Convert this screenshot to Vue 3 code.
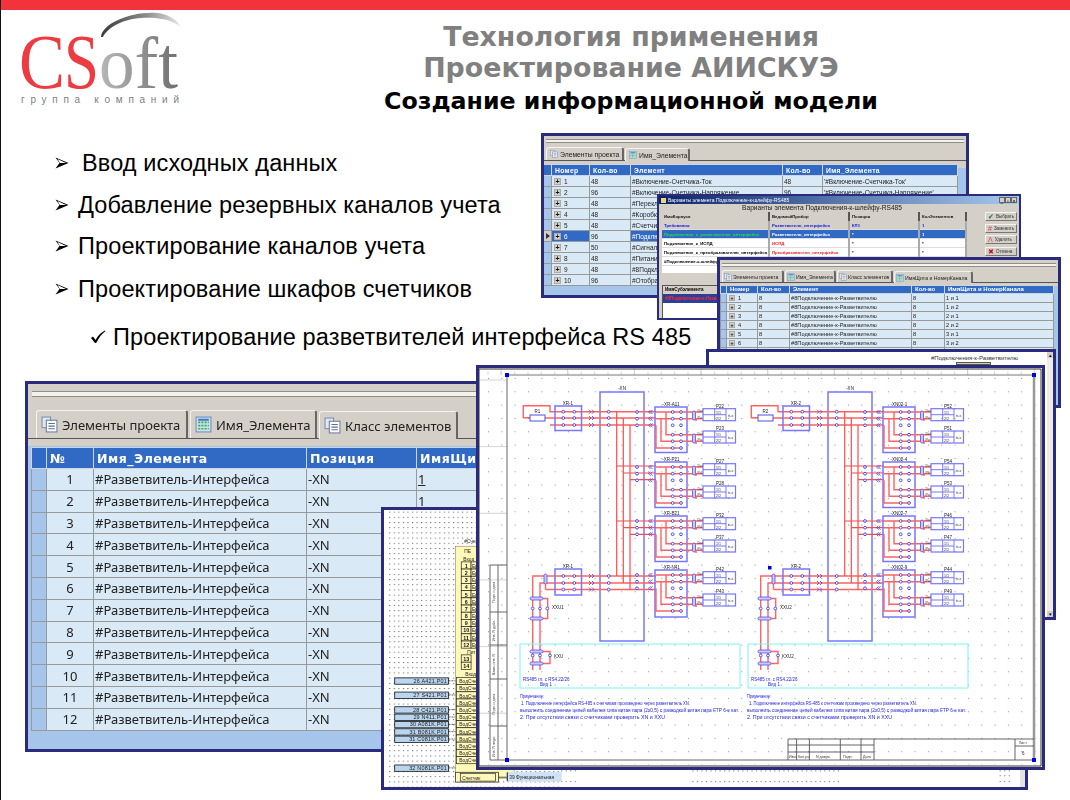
<template>
  <div class="slide">
    <div class="redbar"></div>

    <header class="head">
      <svg class="logo" viewBox="0 0 190 105" width="190" height="105">
        <defs>
          <linearGradient id="swoosh" x1="0" x2="1" y1="0" y2="0">
            <stop offset="0" stop-color="#3a3a3a" />
            <stop offset="0.55" stop-color="#8a8a8a" />
            <stop offset="1" stop-color="#e8e8e8" />
          </linearGradient>
          <linearGradient id="oft" x1="0" x2="1" y1="0" y2="0">
            <stop offset="0" stop-color="#b8b8b8" />
            <stop offset="1" stop-color="#6f6f6f" />
          </linearGradient>
        </defs>
        <path class="swoosh" d="M100 27 C101 13 132 1 156 3 C167 4 175 9 180 17 C170 9 155 7 140 8 C122 9 106 18 102 27 Z" />
        <text class="logo-c" x="18" y="78" textLength="46" lengthAdjust="spacingAndGlyphs">C</text>
        <text class="logo-s" x="63" y="78" textLength="35" lengthAdjust="spacingAndGlyphs">S</text>
        <text class="logo-oft" x="98" y="78" textLength="79" lengthAdjust="spacingAndGlyphs">oft</text>
        <text class="logo-sub" x="20" y="93" textLength="158">группа компаний</text>
      </svg>
      <div class="titles">
        <h1>Технология применения</h1>
        <h1>Проектирование АИИСКУЭ</h1>
        <h2>Создание информационной модели</h2>
      </div>
    </header>

    <ul class="points">
      <li v-for="p in points" :key="p.text" :class="p.cls">
        <svg v-if="!p.check" class="arrow" viewBox="0 0 14 12" width="14" height="12">
          <path d="M0.5 0.5 L13.5 6 L0.5 11.5 L4.5 6 Z" fill="#000" />
          <path d="M2.5 2 L11 6 L4.8 6 Z" fill="#fff" />
        </svg>
        <svg v-else class="tick" viewBox="0 0 16 14" width="16" height="14">
          <path d="M1 8 L3 6.6 L5.6 10 C8 5.6 11 2.6 15 0.6 L15.4 1.2 C11.6 4 9 7.4 6.2 13 L5 13 Z" fill="#000" />
        </svg>
        <span>{{ p.text }}</span>
      </li>
    </ul>

    <!-- окна таблиц -->
    <section v-for="w in panes" :key="w.cls" class="win" :class="w.cls">
      <div class="rules"></div>
      <div class="tabs">
        <div v-for="t in w.tabs" :key="t.name" class="tab" :class="{ on: t.on }">
          <svg v-if="t.grid" class="tabicon" viewBox="0 0 16 16">
            <rect x="1" y="1" width="14" height="14" fill="#cfe0f4" stroke="#6f8fb5" />
            <path d="M3 6h10M3 9h10M3 12h10" stroke="#35b04a" stroke-width="1.6" stroke-dasharray="2 1" />
            <path d="M3 3.5h10" stroke="#3a78c8" stroke-width="2" />
          </svg>
          <svg v-else class="tabicon" viewBox="0 0 16 16">
            <rect x="1" y="1" width="8" height="10" fill="#dfe8f4" stroke="#7c8fb0" />
            <rect x="5" y="4" width="10" height="11" fill="#fff" stroke="#6a7ea3" />
            <path d="M7 7h6M7 9.500h6M7 12h6" stroke="#5a6f96" />
          </svg>
          <span>{{ t.name }}</span>
        </div>
      </div>
      <table class="grid">
        <colgroup>
          <col v-for="(c, i) in w.cols" :key="i" :style="{ width: c + 'px' }" />
        </colgroup>
        <thead>
          <tr>
            <th class="gut"></th>
            <th v-for="h in w.head" :key="h">{{ h }}</th>
          </tr>
        </thead>
        <tbody>
          <tr v-for="(r, i) in w.rows" :key="i" :class="{ sel: w.sel === i }">
            <td class="gut"><i v-if="w.sel === i" class="mark"></i></td>
            <td v-for="(v, j) in r" :key="j" :class="{ num: w.centerFirst && j === 0 }">
              <b v-if="w.plus && j === 0" class="plus">+</b>
              <u v-if="w.under && j === 3 && i === 0">{{ v }}</u>
              <template v-else>{{ v }}</template>
            </td>
          </tr>
        </tbody>
      </table>
    </section>

    <!-- диалог вариантов -->
    <section class="dialog">
      <div class="caption">
        <span class="capicon"></span>
        <span class="captext">Варианты элемента Подключение-к-шлейфу-RS485</span>
        <span class="capbtns"><i>_</i><i>▫</i><i>×</i></span>
      </div>
      <div class="dlgtitle">Варианты элемента Подключения-к-шлейфу-RS485</div>
      <div class="dlgbody">
        <div class="dlgleft">
          <div class="varbox">
            <table class="vars">
              <thead>
                <tr><th>ИмяКорпуса</th><th>ВедомыйПрибор</th><th>Позиция</th><th>КолЭлементов</th></tr>
              </thead>
              <tbody>
                <tr v-for="r in variants" :key="r.name" :class="r.cls">
                  <td class="c1">{{ r.name }}</td>
                  <td class="c2">{{ r.device }}</td>
                  <td>{{ r.pos }}</td>
                  <td>{{ r.qty }}</td>
                </tr>
              </tbody>
            </table>
          </div>
          <div class="subtable">
            <div class="subhead">ИмяСубэлемента</div>
            <div class="subrow">#8Подключение-к-Разветвителю</div>
          </div>
        </div>
        <div class="dlgbtns">
          <button v-for="b in dlgButtons" :key="b.text" type="button">
            <span :class="b.cls">{{ b.icon }}</span>{{ b.text }}
          </button>
        </div>
      </div>
    </section>

    <!-- лист за схемой -->
    <section class="sheet-e">
      <div class="e-top">
        <span class="e-label">#Подключения-к-Разветвителю</span>
        <span class="e-tab"></span>
      </div>
      <div class="scroll"><i>▴</i><em></em><i>▾</i></div>
    </section>

    <!-- лист с таблицей клемм -->
    <section class="sheet-g">
      <svg viewBox="380 507 647 283" width="641" height="277" class="soft">
        <defs>
          <pattern id="fine" x="386" y="514" width="4.65" height="5.3" patternUnits="userSpaceOnUse">
            <rect width="1.2" height="1" fill="#666" />
          </pattern>
        </defs>
        <rect x="380" y="507" width="647" height="283" fill="url(#fine)" />
        <rect x="557" y="768" width="470" height="22" fill="#fff" />
        <path class="dots" d="M691 773.500 H843 M691 784.500 H843 M1005 773.500 H1018 M1005 778.500 H1018 M1005 784.500 H1018 M557 773.500 H575 M557 784.500 H575" />
        <text class="g-t" x="458" y="541">#Счетчик</text>
        <rect x="449" y="544" width="60" height="237" fill="#fff8b8" stroke="#8a8456" stroke-width=".6" />
        <rect x="449" y="775" width="44" height="10" fill="#fff8b8" stroke="#333" stroke-width=".8" />
        <text class="g-t" x="458" y="551">ПЕ</text>
        <text class="g-t" x="457" y="559">Вход</text>
        <g v-for="n in 12" :key="n">
          <rect x="455" :y="560 + (n - 1) * 7.350" width="10" height="7.300" fill="#fff8b8" stroke="#222" stroke-width=".7" />
          <text class="g-n" x="460" :y="566 + (n - 1) * 7.350">{{ n }}</text>
          <rect x="465" :y="560 + (n - 1) * 7.350" width="12" height="7.300" fill="#fff8b8" stroke="#222" stroke-width=".7" />
          <text class="g-t" x="466" :y="566 + (n - 1) * 7.350">Ер</text>
        </g>
        <text class="g-t" x="461" y="654">Пит</text>
        <g v-for="n in 2" :key="'p' + n">
          <rect x="455" :y="655 + (n - 1) * 7.500" width="10" height="7.500" fill="#fff8b8" stroke="#222" stroke-width=".7" />
          <text class="g-n" x="460" :y="661 + (n - 1) * 7.500">{{ 12 + n }}</text>
        </g>
        <text class="g-t" x="459" y="677">Входы</text>
        <g v-for="n in 12" :key="'v' + n">
          <rect x="450" :y="678 + (n - 1) * 7.350" width="40" height="7.350" fill="#fff8b8" stroke="#222" stroke-width=".7" />
          <text class="g-t" x="453" :y="684 + (n - 1) * 7.350">ВодСчет</text>
        </g>
        <g v-for="b in pins" :key="b.text">
          <rect x="387" :y="b.y" width="55" height="6.500" fill="#b9d5ef" stroke="#111" stroke-width=".8" />
          <text class="g-p" x="440.500" :y="b.y + 5.200">{{ b.text }}</text>
          <path :d="`M442 ${b.y + 3} H449`" stroke="#111" stroke-width=".7" stroke-dasharray="2 1" />
        </g>
        <rect x="454" y="776" width="36" height="8" fill="#fff8b8" stroke="#222" stroke-width=".7" />
        <text class="g-t" x="456" y="782.500">Счетчик</text>
        <path d="M493 780 H502" stroke="#111" stroke-width=".7" />
        <rect x="502" y="775" width="55" height="9" fill="#cfe2f5" stroke="#cfe2f5" />
        <path d="M502 775 V784" stroke="#111" />
        <text class="g-t" x="504" y="782">39  Функциональная</text>
      </svg>
      <div class="scroll slim"></div>
    </section>

    <!-- схема подключения -->
    <section class="sheet-f">
      <svg viewBox="475 365 569 405" width="569" height="405" class="soft">
        <defs>
          <pattern id="pts" x="487" y="378" width="13.330" height="13.330" patternUnits="userSpaceOnUse">
            <rect width="1" height="1" fill="#8d8d8d" />
          </pattern>
        </defs>
        <rect x="478" y="368" width="563" height="399" fill="#fff" />
        <rect x="478" y="370" width="563" height="395" fill="url(#pts)" />
        <path class="ruler" :d="rulerPath" />
        <path d="M478 369 H1040 V766 H478 Z" fill="none" stroke="#333" stroke-width="1" />

        <g v-for="(half, hi) in halves" :key="hi" :transform="`translate(${half.dx} 0)`">
          <rect class="blk" x="599" y="392" width="44" height="249" />
          <text class="s-t" x="621" y="389.500" text-anchor="middle">-XN</text>
          <path class="red" :d="wirePath" />
          <path class="pink" :d="busPath" />
          <g v-for="(r, ri) in relays" :key="r">
            <rect class="blk" x="654" :y="r" width="32" :height="ri === 3 ? 47 : 45.500" />
            <text class="s-t" x="670" :y="r - 1.500" text-anchor="middle">{{ half.relay[ri] }}</text>
            <path class="red" :d="relayPath(r)" />
            <rect class="cap" x="691.500" :y="r + 4" width="3" height="9" rx="1.500" />
            <rect class="cap" x="691.500" :y="r + 27" width="3" height="9" rx="1.500" />
            <g v-for="(m, mi) in [1.700, 24]" :key="m">
              <text class="s-t" x="719" :y="r + m - 1" text-anchor="middle">{{ half.meters[ri][mi] }}</text>
              <rect class="blk thin" x="702" :y="r + m" width="32.500" height="12" />
              <path class="thinline" :d="`M702 ${r + m + 6} H725 M713.700 ${r + m} V${r + m + 12} M725 ${r + m} V${r + m + 12}`" />
              <text class="s-k" x="696.500" :y="r + m + 3.500">Dы</text>
              <text class="s-k" x="696.500" :y="r + m + 10">Рн</text>
              <text class="s-k" x="715" :y="r + m + 5">1/1</text>
              <text class="s-k" x="715" :y="r + m + 11">2/2</text>
              <text class="s-k" x="727" :y="r + m + 8">tr-s</text>
            </g>
            <circle v-for="(c, ci) in relayDots" :key="ci" class="dot" :cx="c[0]" :cy="r + c[1]" r="1.400" />
            <circle v-for="(y, yi) in [5, 11.700, 18.300]" :key="'l' + yi" class="dot" cx="636" :cy="r + y" r="1.400" />
            <path v-for="(y, yi) in [5, 11.700, 18.300]" :key="'v' + yi" class="chev" :d="`M651.500 ${r + y - 2} l-2 2 l2 2 M649.500 ${r + y - 2} l-2 2 l2 2`" />
          </g>

          <!-- верхний и нижний ввод -->
          <rect class="blk" x="554" y="406" width="26.500" height="24.500" />
          <rect class="blk" x="554" y="569" width="26.500" height="26" />
          <text class="s-t" x="567" y="404.500" text-anchor="middle">{{ half.xs[0] }}</text>
          <text class="s-t" x="567" y="567.500" text-anchor="middle">{{ half.xs[1] }}</text>
          <text class="s-t" x="536.500" y="413" text-anchor="middle">{{ half.res }}</text>
          <rect class="res" x="529" y="415" width="15" height="6" />
          <g v-for="y in [411.700, 418, 425, 576, 583, 589.500]" :key="y">
            <circle class="dot" cx="562.300" :cy="y" r="1.400" />
            <circle class="dot" cx="573.300" :cy="y" r="1.400" />
            <circle class="dot" cx="607.700" :cy="y" r="1.400" />
            <path class="chev" :d="`M588 ${y - 2} l2 2 l-2 2 M591 ${y - 2} l2 2 l-2 2`" />
          </g>
          <rect class="cap" x="543" y="574" width="3" height="10" rx="1.500" />
          <rect class="cap" x="529" y="597" width="13" height="3" rx="1.500" />
          <rect class="cap" x="529" y="617" width="13" height="3" rx="1.500" />
          <circle v-for="x in [531.700, 539, 546.300]" :key="x" class="dot" :cx="x" cy="608.500" r="1.400" />
          <text class="s-t" x="551" y="609">{{ half.xt[0] }}</text>
          <rect class="cap" x="529" y="650" width="13" height="3" rx="1.500" />
          <rect class="cap" x="529" y="662" width="13" height="3" rx="1.500" />
          <circle v-for="x in [531.700, 539, 549]" :key="'b' + x" class="dot" :cx="x" cy="655.500" r="1.400" />
          <text class="s-t" x="553" y="658">{{ half.xt[1] }}</text>

          <rect class="cy" x="519" y="644" width="220" height="44" />
          <text class="s-b" x="522" y="681">RS485 гл. с RS4.22/26</text>
          <text class="s-b" x="539" y="686">Вид 1</text>
        </g>

        <g v-for="n in notes" :key="n.x + n.y">
          <text class="s-b" :x="n.x" :y="n.y" :textLength="n.w" lengthAdjust="spacingAndGlyphs">{{ n.text }}</text>
        </g>

        <!-- рамка и штамп -->
        <path d="M506 375 V760 H1033" fill="none" stroke="#666" stroke-width="1" />
        <path d="M506 375 H1033" fill="none" stroke="#777" stroke-width="1" />
        <path d="M1033 375 V760" fill="none" stroke="#999" stroke-width="2.500" />
        <path class="stamp" d="M489 565 H506 M489 612 H506 M489 645 H506 M489 679 H506 M489 726 H506 M489 565 V760 H506 M497 565 V760" />
        <text v-for="s in sideLabels" :key="s.y" class="s-k" :transform="`translate(494 ${s.y}) rotate(-90)`">{{ s.t }}</text>
        <path class="stamp" d="M787 760 V739 H1033 M787 745 H873 M787 752 H873 M795.600 739 V760 M808.400 739 V760 M839.300 739 V760 M860 739 V760 M873 739 V760 M1014 739 V760 M1014 746 H1033" />
        <text class="s-k" x="788" y="758">Изм.</text>
        <text class="s-k" x="797" y="758">Кол.уч</text>
        <text class="s-k" x="815" y="758">N докум.</text>
        <text class="s-k" x="842" y="758">Подп.</text>
        <text class="s-k" x="862" y="758">Дата</text>
        <text class="s-k" x="1018" y="744">Лист</text>
        <text class="s-t" x="1021" y="755">6</text>

        <rect class="handle" x="504" y="373" width="4" height="4" />
        <rect class="handle" x="1031" y="373" width="4" height="4" />
        <rect class="handle" x="1031" y="758" width="4" height="4" />
        <rect class="handle" x="504" y="758" width="4" height="4" />
        <rect class="handle" x="767" y="566" width="3.500" height="3.500" />
      </svg>
    </section>
  </div>
</template>

<script setup>
const points = [
  { text: 'Ввод исходных данных', cls: 'p1' },
  { text: 'Добавление резервных каналов учета', cls: 'p2' },
  { text: 'Проектирование каналов учета', cls: 'p3' },
  { text: 'Проектирование шкафов счетчиков', cls: 'p4' },
  { text: 'Проектирование разветвителей интерфейса RS 485', cls: 'p5', check: true },
];

const makeRows = (n, fn) => Array.from({ length: n }, (_, i) => fn(i));

const paneA = {
  cls: 'pane-a',
  tabs: [
    { name: 'Элементы проекта' },
    { name: 'Имя_Элемента', grid: true },
    { name: 'Класс элементов', on: true },
  ],
  cols: [15, 47, 213, 110, 110],
  head: ['№', 'Имя_Элемента', 'Позиция', 'ИмяЩита'],
  rows: makeRows(12, (i) => [String(i + 1), '#Разветвитель-Интерфейса', '-XN', '1']),
  centerFirst: true,
  under: true,
};

const namesB = [
  ['48', '#Включение-Счетчика-Ток', '48', "'#Включение-Счетчика-Ток'"],
  ['96', '#Включение-Счетчика-Напряжение', '96', "'#Включение-Счетчика-Напряжение'"],
  ['48', '#Переключатель-Испытательный', '48', "'#Переключатель'"],
  ['48', '#Коробка-Испытательная', '48', "'#Коробка'"],
  ['48', '#Счетчик', '48', "'#Счетчик'"],
  ['96', '#Подключение-к-шлейфу-RS485', '96', "'#Подключение'"],
  ['50', '#Сигнал', '50', "'#Сигнал'"],
  ['48', '#Питание', '48', "'#Питание'"],
  ['48', '#8Подключение', '48', "'#8Подключение'"],
  ['96', '#Отображение', '96', "'#Отображение'"],
];

const paneB = {
  cls: 'pane-b',
  tabs: [{ name: 'Элементы проекта' }, { name: 'Имя_Элемента', grid: true, on: true }],
  cols: [8, 38, 41, 152, 40, 135],
  head: ['Номер', 'Кол-во', 'Элемент', 'Кол-во', 'Имя_Элемента'],
  rows: namesB.map((r, i) => [String(i + 1), ...r]),
  plus: true,
  sel: 5,
};

const pairsD = ['1 и 1', '1 и 2', '2 и 1', '2 и 2', '3 и 1', '3 и 2', '4 и 1', '4 и 2'];

const paneD = {
  cls: 'pane-d',
  tabs: [
    { name: 'Элементы проекта' },
    { name: 'Имя_Элемента', grid: true },
    { name: 'Класс элементов' },
    { name: 'ИмяЩита и НомерКанала', grid: true, on: true },
  ],
  cols: [6, 31, 32, 122, 33, 109],
  head: ['Номер', 'Кол-во', 'Элемент', 'Кол-во', 'ИмяЩита и НомерКанала'],
  rows: pairsD.map((p, i) => [String(i + 1), '8', '#8Подключение-к-Разветвителю', '8', p]),
  plus: true,
};

const panes = [paneA, paneB, paneD];

const variants = [
  { name: 'Требования', device: 'Разветвитель_интерфейса', pos: 'КЛ1', qty: '1', cls: 'req' },
  { name: 'Подключение_к_разветвителю_интерфейса', device: 'Разветвитель_интерфейса', pos: '*', qty: '1', cls: 'cur' },
  { name: 'Подключение_к_ИСПД', device: 'ИСПД', pos: '*', qty: '*', cls: 'alt' },
  { name: 'Подключение_к_преобразователю_интерфейса', device: 'Преобразователь_интерфейса', pos: '*', qty: '*', cls: 'alt' },
  { name: '#Подключение-к-шлейфу', device: '', pos: '', qty: '', cls: 'plain' },
];

const dlgButtons = [
  { text: 'Выбрать', icon: '✔', cls: 'ok' },
  { text: 'Заменить', icon: '#', cls: 'rep' },
  { text: 'Удалить', icon: 'Λ', cls: 'rep' },
  { text: 'Отмена', icon: '✖', cls: 'del' },
];

const pins = [
  { y: 678.500, text: '26  A421.P01' },
  { y: 693, text: '27  S421.P01' },
  { y: 708, text: '28  C421.P01' },
  { y: 715.500, text: '29  N411.P01' },
  { y: 723, text: '30  A081K.P01' },
  { y: 730.500, text: '31  B081K.P01' },
  { y: 738, text: '31  C081K.P01' },
  { y: 767.500, text: '32  N081K.P01' },
];

// геометрия схемы задана в координатах слайда
const relays = [407, 462, 516, 570];
const busX = [615.7, 622.3, 629];
const topY = [411.7, 418, 425];
const lowY = [576, 583, 589.5];
const branches = [
  [466, 473, 479.7],
  [521, 527.7, 534.3],
];

const halves = [
  {
    dx: 0,
    res: 'R1',
    xs: ['XR-1', 'XR-1'],
    xt: ['XXU1', 'KXU'],
    relay: ['-XR-A11', '-XR-P21', '-XR-B21', '-XR-N41'],
    meters: [
      ['P22', 'P23'],
      ['P27', 'P28'],
      ['P32', 'P37'],
      ['P42', 'P43'],
    ],
  },
  {
    dx: 228,
    res: 'R2',
    xs: ['XR-2', 'XR-2'],
    xt: ['XXU2', 'KXU2'],
    relay: ['-XN02-1', '-XN02-4', '-XN02-7', '-XN02-9'],
    meters: [
      ['P52', 'P51'],
      ['P54', 'P53'],
      ['P46', 'P47'],
      ['P44', 'P49'],
    ],
  },
];

const wirePath = [
  'M529 417.7 H522.3 V405.7 H549 V411.7 H655',
  'M544 418 H655',
  'M549 425 H655',
  'M531.7 670 V576 H655',
  'M539 670 V583 H655',
  'M544.5 589.500 H655',
  'M544.5 584 V589.5',
  'M542 598.5 H546.7 V618.5 H542',
  'M542 651.5 H549 V663.5 H542',
].join(' ');

const busPath = busX
  .map((x, i) => {
    const stubs = branches.map((b) => `M${x} ${b[i]} H655`).join(' ');
    return `M${x} ${topY[i]} V${lowY[i]} ${stubs}`;
  })
  .join(' ');

const relayPath = (r) =>
  [
    `M655 ${r + 5} H702`,
    `M655 ${r + 11.7} H702`,
    `M665 ${r + 5} V${r + 27.7} H702`,
    `M660 ${r + 11.7} V${r + 34.3} H702`,
    `M655 ${r + 18.3} V${r + 41} H680`,
    `M694 ${r + 13} H696 M694 ${r + 36} H696`,
  ].join(' ');

const relayDots = [5, 11.7, 18.3, 27.7, 34.3, 41].flatMap((y) => [
  [671.7, y],
  [680, y],
]);

const notes = [
  { x: 519, y: 698, w: 24, text: 'Примечание:' },
  { x: 520, y: 705, w: 169, text: '1. Подключение интерфейса RS-485 к счетчикам произведено через разветвитель XN.' },
  { x: 519, y: 712, w: 219, text: 'выполнить соединение цепей кабелем типа витая пара (2х0,5) с разводкой витая пара FTP 6-е кат.' },
  { x: 519, y: 719, w: 145, text: '2. При отсутствии связи с счетчиками проверить XN и XXU' },
  { x: 746, y: 698, w: 24, text: 'Примечание:' },
  { x: 748, y: 705, w: 168, text: '1. Подключение интерфейса RS-485 к счетчикам произведено через разветвитель XN.' },
  { x: 746, y: 712, w: 219, text: 'выполнить соединение цепей кабелем типа витая пара (2х0,5) с разводкой витая пара FTP 6-е кат.' },
  { x: 746, y: 719, w: 145, text: '2. При отсутствии связи с счетчиками проверить XN и XXU' },
];

const sideLabels = [
  { t: 'Подп. и дата', y: 603 },
  { t: 'Инв. N дубл.', y: 641 },
  { t: 'Взам. инв. N', y: 675 },
  { t: 'Подп. и дата', y: 715 },
  { t: 'Инв. N подл.', y: 757 },
];

// засечки линейки и светлая сетка вокруг листа
let ruler = '';
for (let x = 487; x < 1040; x += 13.33) ruler += `M${x.toFixed(1)} 371.5 V375 `;
for (let x = 500; x < 1040; x += 66.65) ruler += `M${x.toFixed(1)} 369 V375 `;
for (let y = 380; y < 770; y += 66.65) ruler += `M478 ${y.toFixed(1)} H506 `;
const rulerPath = ruler;
</script>

<style scoped>
.slide {
  position: relative;
  width: 1069px;
  height: 800px;
  overflow: hidden;
  background: #fff;
  border-left: 1px solid #111;
  font-family: "Liberation Sans", Arial, sans-serif;
  color: #000;
}

.redbar {
  position: absolute;
  left: -1px;
  right: 0;
  top: 0;
  height: 10px;
  background: #f3333b;
}

.head {
  display: flex;
  padding-top: 10px;
  height: 105px;
}

.logo {
  flex: none;
  margin-right: 1px;
}

.swoosh {
  fill: url(#swoosh);
}

.logo-c,
.logo-s {
  font-family: "Liberation Serif", serif;
  font-size: 78px;
  fill: #ee3a41;
}

.logo-oft {
  font-family: "Liberation Serif", serif;
  font-size: 74px;
  fill: url(#oft);
}

.logo-sub {
  font-family: "Liberation Sans", sans-serif;
  font-size: 10px;
  fill: #7f7f7f;
}

.titles {
  flex: 1;
  text-align: center;
  font-family: "DejaVu Sans", Verdana, sans-serif;
  padding-top: 11px;
}

.titles h1 {
  margin: 0;
  font-size: 26.800px;
  line-height: 31px;
  font-weight: 700;
  color: #808080;
}

.titles h2 {
  margin: 3px 0 0;
  font-size: 23.700px;
  line-height: 31px;
  font-weight: 700;
  color: #000;
}

.points {
  list-style: none;
  margin: 0;
  padding: 35px 0 0 54px;
  font-size: 23.500px;
  line-height: 26px;
  letter-spacing: 0.13px;
}

.points li {
  display: flex;
  align-items: center;
  white-space: nowrap;
}

.p1 {
  gap: 13px;
}

.p2,
.p3,
.p4 {
  gap: 9px;
}

.p2 {
  margin-top: 16px;
}

.p3 {
  margin-top: 15px;
}

.p4 {
  margin-top: 17px;
}

.p5 {
  margin: 22px 0 0 35px;
  gap: 7px;
}

.arrow,
.tick {
  flex: none;
}

/* окна */
.win {
  position: absolute;
  box-sizing: border-box;
  background: #d4d0c8;
  border: 3px solid #2b2b7d;
  overflow: hidden;
  filter: blur(0.25px);
}

.rules {
  border-top: 1px solid #8f8f8a;
  border-bottom: 1px solid #8f8f8a;
  background: #f4f2ee;
  height: 4px;
}

.tabs {
  display: flex;
  align-items: flex-end;
  border-bottom: 1px solid #555;
}

.tab {
  display: flex;
  align-items: center;
  box-sizing: border-box;
  background: #d4d0c8;
  border: 1px solid #f4f2ee;
  border-right: 2px solid #666;
  border-bottom: 0;
  border-radius: 3px 3px 0 0;
  white-space: nowrap;
  overflow: hidden;
  color: #222;
}

.tab.on {
  position: relative;
  top: 1px;
}

.tabicon {
  flex: none;
}

.grid {
  table-layout: fixed;
  border-collapse: collapse;
  background: #d9e9f6;
}

.grid th {
  background: #316ac5;
  color: #fff;
  text-align: left;
  font-weight: 700;
  border: 1px solid #cfd5e0;
  padding: 0 3px;
  overflow: hidden;
  white-space: nowrap;
}

.grid td {
  border: 1px solid #999;
  padding: 0 1px;
  white-space: nowrap;
  overflow: hidden;
  color: #222;
}

.grid .gut {
  background: #a6c5ea;
  padding: 0;
}

.grid th.gut {
  background: #316ac5;
}

.grid td.num {
  text-align: center;
}

.grid tr.sel td {
  background: #316ac5;
  color: #fff;
}

.grid tr.sel td.gut {
  background: #d4d0c8;
}

.grid tr.sel td:nth-child(3) {
  background: #d9e9f6;
  color: #222;
  border-style: dashed;
}

.mark {
  display: block;
  width: 0;
  height: 0;
  border-left: 4px solid #333;
  border-top: 3px solid transparent;
  border-bottom: 3px solid transparent;
  margin-left: 2px;
}

.plus {
  display: inline-block;
  box-sizing: border-box;
  width: 7px;
  height: 7px;
  line-height: 5px;
  margin: 0 3px 0 1px;
  text-align: center;
  font-size: 7px;
  font-weight: 700;
  background: #d4d0c8;
  border: 1px solid #aaa;
  color: #111;
  vertical-align: 0;
}

/* большая таблица */
.pane-a {
  left: 24px;
  top: 381px;
  width: 510px;
  height: 371px;
  background: linear-gradient(#d4d0c8 0 62px, #a6c5ea 62px);
  z-index: 1;
}

.pane-a .rules {
  margin: 7px 4px 0 4px;
}

.pane-a .tabs {
  margin-top: 12px;
  height: 29px;
  padding-left: 8px;
  gap: 2px;
  font-family: "Noto Sans", "Open Sans", sans-serif;
  font-size: 13px;
}

.pane-a .tab {
  height: 28px;
  padding: 0 6px 0 4px;
  gap: 4px;
}

.pane-a .tab:nth-child(1) {
  width: 152px;
}

.pane-a .tab:nth-child(2) {
  width: 127px;
}

.pane-a .tab:nth-child(3) {
  width: 139px;
}

.pane-a .tabicon {
  width: 17px;
  height: 17px;
}

.pane-a .grid {
  margin: 8px 0 0 3px;
  width: 495px;
  font-family: "Noto Sans", "Open Sans", sans-serif;
  font-size: 13px;
}

.pane-a .grid th {
  height: 20px;
  font-family: "DejaVu Sans", sans-serif;
  font-size: 12.500px;
  letter-spacing: 0.5px;
}

.pane-a .grid td {
  height: 20.800px;
}

/* верхнее окно */
.pane-b {
  left: 540px;
  top: 133px;
  width: 428px;
  height: 165px;
  background: linear-gradient(#d4d0c8 0 32px, #a6c5ea 32px);
  z-index: 2;
}

.pane-d {
  left: 716px;
  top: 257px;
  width: 344px;
  height: 151px;
  background: linear-gradient(#d4d0c8 0 26px, #a6c5ea 26px);
  z-index: 4;
}

.pane-b .rules,
.pane-d .rules {
  margin: 3px 2px 0;
  height: 2px;
}

.pane-b .tabs,
.pane-d .tabs {
  font-family: "Liberation Sans", sans-serif;
  padding-left: 2px;
  gap: 1px;
}

.pane-b .tabs {
  margin-top: 3px;
  height: 14px;
  font-size: 6.800px;
}

.pane-d .tabs {
  margin-top: 1px;
  height: 14px;
  font-size: 5.200px;
}

.pane-b .tab {
  height: 13px;
  padding: 0 3px;
  gap: 2px;
}

.pane-b .tab:nth-child(1) {
  width: 78px;
}

.pane-b .tab:nth-child(2) {
  width: 65px;
}

.pane-d .tab {
  height: 12px;
  padding: 0 1px;
  gap: 1px;
}

.pane-d .tab:nth-child(1) {
  width: 62px;
}

.pane-d .tab:nth-child(2) {
  width: 51px;
}

.pane-d .tab:nth-child(3) {
  width: 56px;
}

.pane-d .tab:nth-child(4) {
  width: 79px;
}

.pane-b .tabicon,
.pane-d .tabicon {
  width: 8px;
  height: 8px;
}

.pane-b .grid {
  margin: 3px 0 0 -1px;
  width: 414px;
  font-family: "Liberation Sans", sans-serif;
  font-size: 6.500px;
}

.pane-b .grid th {
  height: 10px;
  font-size: 6.800px;
  letter-spacing: 0.3px;
}

.pane-b .grid td {
  height: 10px;
  line-height: 9px;
}

.pane-d .grid {
  margin: 2px 0 0 0;
  width: 333px;
  font-family: "Liberation Sans", sans-serif;
  font-size: 5.700px;
}

.pane-d .grid th {
  height: 7px;
  line-height: 7px;
  font-size: 6px;
}

.pane-d .grid td {
  height: 8px;
  line-height: 8px;
}

.pane-d .plus {
  width: 6px;
  height: 6px;
  line-height: 4px;
  font-size: 6px;
}

/* диалог */
.dialog {
  position: absolute;
  left: 656px;
  top: 194px;
  width: 364px;
  height: 126px;
  box-sizing: border-box;
  background: #d4d0c8;
  border: 2px solid #2b2b7d;
  z-index: 3;
  font-family: "Liberation Sans", sans-serif;
  overflow: hidden;
  filter: blur(0.25px);
}

.caption {
  display: flex;
  align-items: center;
  height: 8px;
  background: linear-gradient(90deg, #0a246a, #a6caf0);
  color: #fff;
  font-size: 5px;
  padding: 0 2px;
  gap: 2px;
}

.capicon {
  width: 5px;
  height: 5px;
  background: #e8d878;
}

.captext {
  flex: 1;
  white-space: nowrap;
}

.capbtns {
  display: flex;
}

.capbtns i {
  display: block;
  width: 6px;
  height: 6px;
  line-height: 6px;
  font-size: 5px;
  font-style: normal;
  text-align: center;
  background: #d4d0c8;
  border: 1px solid #666;
  box-sizing: border-box;
  color: #000;
}

.dlgtitle {
  text-align: center;
  font-size: 6.600px;
  line-height: 8px;
  height: 8px;
  padding-right: 34px;
  color: #222;
}

.dlgbody {
  display: flex;
  padding-left: 3px;
  gap: 18px;
}

.dlgleft {
  width: 305px;
  flex: none;
}

.varbox {
  height: 61px;
  background: #fff;
}

.vars {
  width: 305px;
  table-layout: fixed;
  border-collapse: collapse;
  background: #fff;
  font-size: 4.300px;
  font-weight: 700;
}

.vars th {
  height: 9px;
  background: #d4d0c8;
  color: #111;
  text-align: left;
  border-right: 2px solid #555;
  padding: 0 2px;
  white-space: nowrap;
  overflow: hidden;
}

.vars td {
  height: 8px;
  padding: 0 2px;
  border-right: 2px solid #aaa;
  border-bottom: 1px solid #ddd;
  white-space: nowrap;
  overflow: hidden;
}

.vars th:nth-child(1) {
  width: 102px;
}

.vars th:nth-child(2) {
  width: 74px;
}

.vars th:nth-child(3) {
  width: 64px;
}

.vars .req td {
  background: #d4d0c8;
  color: #1616e0;
}

.vars .cur td {
  background: #316ac5;
  color: #fff;
}

.vars .cur .c1 {
  color: #22e040;
}

.vars .alt .c2 {
  color: #ee2222;
}

.subtable {
  margin-top: 12px;
  width: 305px;
  border: 1px solid #555;
  font-size: 4.500px;
  font-weight: 700;
  background: #fff;
  height: 32px;
}

.subhead {
  height: 8px;
  line-height: 8px;
  padding-left: 2px;
  background: #d4d0c8;
}

.subrow {
  height: 9px;
  line-height: 9px;
  padding-left: 2px;
  background: #2a3f9a;
  color: #ff2a2a;
}

.dlgbtns {
  display: flex;
  flex-direction: column;
  gap: 2.500px;
  width: 32px;
}

.dlgbtns button {
  height: 9px;
  padding: 0 0 0 2px;
  display: flex;
  align-items: center;
  gap: 2px;
  border: 1px solid #f4f2ee;
  border-right-color: #777;
  border-bottom-color: #777;
  background: #d4d0c8;
  font-family: inherit;
  font-size: 4.500px;
  color: #333;
}

.dlgbtns span {
  font-size: 7px;
  line-height: 7px;
}

.ok {
  color: #17801f;
}

.rep {
  color: #d04a3a;
}

.del {
  color: #c01818;
}

/* листы */
.sheet-e {
  position: absolute;
  left: 705px;
  top: 349px;
  width: 350px;
  height: 271px;
  box-sizing: border-box;
  background: #fff;
  border: 3px solid #2b2b7d;
  z-index: 5;
}

.e-top {
  position: relative;
  height: 13px;
  background-image: radial-gradient(#777 0.5px, transparent 0.6px);
  background-size: 4px 4px;
  background-position: 0 1px;
  font-family: "Liberation Sans", sans-serif;
  font-size: 6px;
}

.e-label {
  position: absolute;
  left: 222px;
  top: 3px;
  background: #fff;
  color: #333;
  white-space: nowrap;
}

.e-tab {
  position: absolute;
  left: 247px;
  top: 10px;
  width: 35px;
  height: 3px;
  background: #d8d4a8;
  border: 1px solid #555;
  box-sizing: border-box;
}

.scroll {
  position: absolute;
  right: 0;
  top: 0;
  bottom: 0;
  width: 6px;
  background: #eeece6;
  display: flex;
  flex-direction: column;
  font-size: 5px;
  line-height: 6px;
  text-align: center;
}

.scroll i {
  font-style: normal;
  height: 6px;
  background: #d4d0c8;
}

.scroll em {
  flex: 1;
}

.sheet-g {
  position: absolute;
  left: 380px;
  top: 507px;
  width: 647px;
  height: 283px;
  box-sizing: border-box;
  background: #fff;
  border: 3px solid #2b2b7d;
  overflow: hidden;
  z-index: 6;
}

.sheet-g svg {
  display: block;
}

.scroll.slim {
  width: 5px;
  background: #e3e3e3;
}

.sheet-f {
  position: absolute;
  left: 475px;
  top: 365px;
  width: 569px;
  height: 405px;
  box-sizing: border-box;
  border: 3px solid #2b2b7d;
  background: #fff;
  overflow: hidden;
  z-index: 7;
}

.sheet-f svg {
  display: block;
  margin: -3px;
}

.soft {
  filter: blur(0.3px);
}

.ruler {
  fill: none;
  stroke: #c9c9c9;
  stroke-width: 0.8;
}

.dots {
  fill: none;
  stroke: #777;
  stroke-width: 1;
  stroke-dasharray: 1.2 3.450;
}

.blk {
  fill: none;
  stroke: #7676ff;
  stroke-width: 1.500;
}

.blk.thin {
  stroke-width: 1.200;
}

.thinline {
  fill: none;
  stroke: #7676ff;
  stroke-width: 1;
}

.red {
  fill: none;
  stroke: #ff6262;
  stroke-width: 1.400;
}

.pink {
  fill: none;
  stroke: #ff4a4a;
  stroke-width: 1.200;
}

.dot {
  fill: #fff;
  stroke: #4f4fe8;
  stroke-width: 1;
}

.chev {
  fill: none;
  stroke: #4f4fe8;
  stroke-width: 0.9;
}

.cap {
  fill: #cfc8ff;
  stroke: #4f4fe8;
  stroke-width: 0.8;
}

.res {
  fill: #fff;
  stroke: #4f4fe8;
  stroke-width: 1;
}

.cy {
  fill: none;
  stroke: #7ff4f4;
  stroke-width: 1;
}

.stamp {
  fill: none;
  stroke: #555;
  stroke-width: 0.9;
}

.handle {
  fill: #0000e0;
}

.s-t,
.s-k,
.s-b,
.g-t,
.g-n,
.g-p {
  font-family: "Liberation Sans", sans-serif;
}

.s-t {
  font-size: 4.500px;
  fill: #222;
}

.s-k {
  font-size: 3.600px;
  fill: #333;
}

.s-b {
  font-size: 4.500px;
  fill: #2222dd;
}

.g-t {
  font-size: 5px;
  fill: #222;
}

.g-p {
  font-size: 5.600px;
  fill: #222;
  text-anchor: end;
  letter-spacing: 0.2px;
}

.g-n {
  font-size: 5.500px;
  font-weight: 700;
  fill: #111;
  text-anchor: middle;
}
</style>
